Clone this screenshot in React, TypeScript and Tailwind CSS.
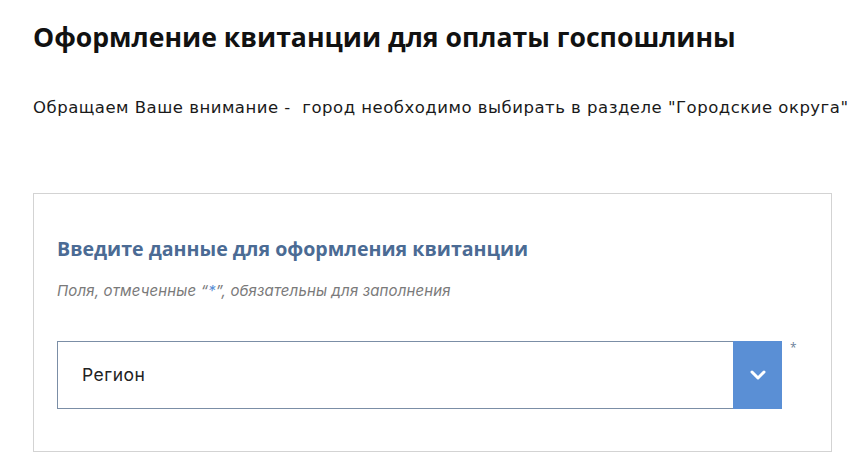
export default function App() {
  return (
    <div className="w-[862px] h-[469px] overflow-hidden bg-white pl-[33px] pt-[19px] font-['Open_Sans',sans-serif]">
      {/* Заголовок страницы */}
      <h1 className="text-[26.6px] leading-[36px] font-bold text-[#111111]">
        Оформление квитанции для оплаты госпошлины
      </h1>
      <p className="mt-[41px] font-['DejaVu_Sans',sans-serif] text-[16.5px] tracking-[0.5px] leading-[24px] text-[#1a1a1a] whitespace-pre">
        Обращаем Ваше внимание -  город необходимо выбирать в разделе "Городские округа"
      </p>

      {/* Форма */}
      <div className="mt-[73px] w-[799px] border border-[#d3d3d3] pl-[23px] pt-[41px] pb-[42px]">
        <h2 className="text-[19.6px] leading-[28px] font-bold text-[#4b6b94]">
          Введите данные для оформления квитанции
        </h2>
        <p className="mt-[18px] font-['Inter',sans-serif] text-[15px] tracking-[0.15px] leading-[20px] italic text-[#7a7a7a]">
          Поля, отмеченные “<span className="text-[#5a8fd5]">*</span>”, обязательны для заполнения
        </p>
        <div className="mt-[40px] flex items-start">
          <div className="w-[725px] h-[68px] flex border border-[#7b8ea6]">
            <div className="flex-1 flex items-center pl-[24px] font-['Inter',sans-serif] text-[17.5px] tracking-[0.5px] text-[#222222]">Регион</div>
            <div className="w-[49px] -my-px -mr-px bg-[#5a8fd5] flex items-center justify-center">
              <svg width="16" height="10" viewBox="0 0 16 10" fill="none">
                <polyline points="2,2 8,8 14,2" stroke="white" strokeWidth="3" strokeLinecap="round" strokeLinejoin="round" />
              </svg>
            </div>
          </div>
          <span className="ml-[8px] mt-[1px] text-[12px] leading-[12px] text-[#6b7f99]">*</span>
        </div>
      </div>
    </div>
  );
}
